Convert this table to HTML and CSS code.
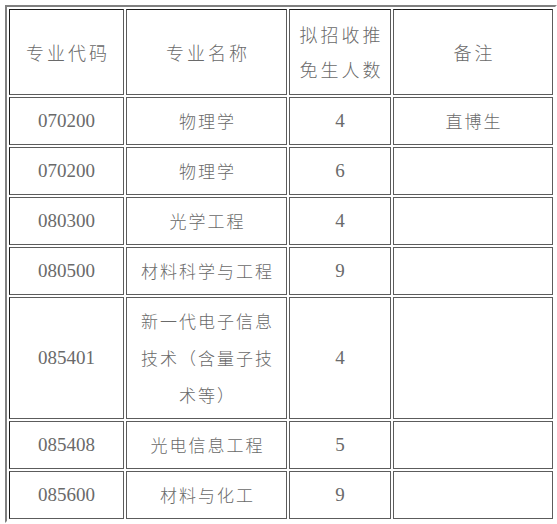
FILE: index.html
```html
<!DOCTYPE html>
<html lang="zh-CN">
<head>
<meta charset="utf-8">
<title>拟招收推免生</title>
<link rel="stylesheet" href="styles.css">
</head>
<body>
<table class="plan">
  <thead>
    <tr>
      <th class="c1 first">专业代码</th>
      <th class="c2">专业名称</th>
      <th class="c3">拟招收推<br>免生人数</th>
      <th class="c4">备注</th>
    </tr>
  </thead>
  <tbody>
    <tr>
      <td class="first num">070200</td>
      <td>物理学</td>
      <td class="num">4</td>
      <td>直博生</td>
    </tr>
    <tr>
      <td class="first num">070200</td>
      <td>物理学</td>
      <td class="num">6</td>
      <td></td>
    </tr>
    <tr>
      <td class="first num">080300</td>
      <td>光学工程</td>
      <td class="num">4</td>
      <td></td>
    </tr>
    <tr>
      <td class="first num">080500</td>
      <td>材料科学与工程</td>
      <td class="num">9</td>
      <td></td>
    </tr>
    <tr>
      <td class="first num">085401</td>
      <td class="wrap">新一代电子信息技术（含量子技术等）</td>
      <td class="num">4</td>
      <td></td>
    </tr>
    <tr>
      <td class="first num">085408</td>
      <td>光电信息工程</td>
      <td class="num">5</td>
      <td></td>
    </tr>
    <tr>
      <td class="first num">085600</td>
      <td>材料与化工</td>
      <td class="num">9</td>
      <td></td>
    </tr>
  </tbody>
</table>
</body>
</html>
```
FILE: styles.css
```css
html, body {
  background: #ffffff;
}
body {
  margin: 5px 0 0 5px;
  font-family: "Noto Sans CJK SC", "Liberation Serif", serif;
  color: #6a6a6a;
}
.plan {
  width: 552px;
  table-layout: fixed;
  border-collapse: separate;
  border-spacing: 2px;
  border-style: solid;
  border-width: 2px;
  border-color: #808080 #ffffff #ffffff #808080;
}
.plan th,
.plan td {
  box-sizing: border-box;
  border: 1px solid #5c5c5c;
  text-align: center;
  vertical-align: middle;
  font-weight: 300;
  padding: 0;
}
.plan th {
  font-size: 18px;
  letter-spacing: 3px;
  line-height: 35px;
  padding: 7px 0 7px 3px;
  border-top-color: #1c1c1c;
}
.plan td {
  font-size: 17px;
  letter-spacing: 2px;
  line-height: 37px;
  padding: 4px 0 5px 2px;
}
.plan .first {
  border-left-color: #1c1c1c;
}
.plan .num {
  font-family: "Liberation Serif", serif;
  font-size: 19px;
  letter-spacing: 0;
  padding-left: 0;
}
.plan .wrap {
  padding-left: 12px;
  padding-right: 10px;
}
.c1 { width: 115px; }
.c2 { width: 161px; }
.c3 { width: 102px; }
.c4 { width: 160px; }
```
